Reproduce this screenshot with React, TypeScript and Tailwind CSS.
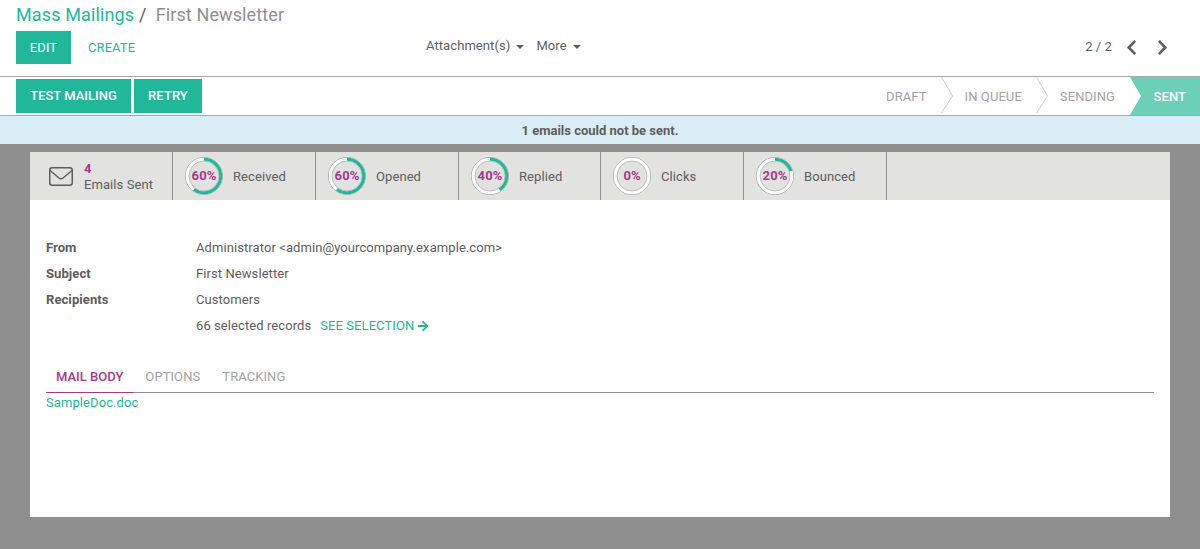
// Mass mailing form view: control panel, status bar, stat buttons, and the sheet below them.
import { FaArrowRight, FaChevronLeft, FaChevronRight } from 'react-icons/fa';

const GAUGES = [
    { pct: 60, label: 'Received', width: 'w-[143px]' },
    { pct: 60, label: 'Opened', width: 'w-[143px]' },
    { pct: 40, label: 'Replied', width: 'w-[142px]' },
    { pct: 0, label: 'Clicks', width: 'w-[143px]' },
    { pct: 20, label: 'Bounced', width: 'w-[143px]' },
];

const FIELDS = [
    { label: 'From', value: 'Administrator <admin@yourcompany.example.com>' },
    { label: 'Subject', value: 'First Newsletter' },
    { label: 'Recipients', value: 'Customers' },
];

function Gauge({ pct, label, width }: { pct: number; label: string; width: string }) {
    const r = 16.75;
    const c = 2 * Math.PI * r;
    return (
        <div className={`flex h-12 items-center gap-[10px] border-r border-[#8f8f8f] pl-[12px] ${width}`}>
            <div className="relative h-[38px] w-[38px] shrink-0">
                <svg viewBox="0 0 38 38" className="h-[38px] w-[38px]">
                    <circle cx="19" cy="19" r="18.5" fill="none" stroke="#8f9a98" strokeWidth="0.75" />
                    <circle cx="19" cy="19" r={r} fill="none" stroke="#ffffff" strokeWidth="3" />
                    <circle
                        cx="19"
                        cy="19"
                        r={r}
                        fill="none"
                        stroke="#21b799"
                        strokeWidth="3"
                        strokeDasharray={`${(c * pct) / 100} ${c}`}
                        transform="rotate(-90 19 19)"
                    />
                    <circle cx="19" cy="19" r="15" fill="none" stroke="#8f9a98" strokeWidth="0.5" />
                </svg>
                <span className="absolute inset-0 flex items-center justify-center text-[13px] font-bold text-[#a5388d]">{pct}%</span>
            </div>
            <span className="pt-[1px]">{label}</span>
        </div>
    );
}

function StepArrow() {
    return (
        <svg viewBox="0 0 12 38" className="h-[38px] w-[12px] shrink-0">
            <path d="M0.5 0 L11.5 19 L0.5 36" fill="none" stroke="#cfcfcf" strokeWidth="1" />
        </svg>
    );
}

export default function App() {
    return (
        <div className="flex h-[549px] w-[1200px] flex-col overflow-hidden bg-[#8f8f8f] text-[13px] leading-[18px] tracking-[0.08px] text-[#5d5d5d] [font-family:Roboto,sans-serif]">
            <div className="h-[77px] shrink-0 border-b border-[#a8a8a8] bg-white px-4">
                <div className="flex h-[31px] items-center pb-[2px] text-[18px] leading-6 tracking-[0.12px]">
                    <span className="text-[#21b799]">Mass Mailings</span>
                    <span className="ml-[5px] text-[#5d5d5d]">/</span>
                    <span className="ml-[9px] text-[#8f8f8f]">First Newsletter</span>
                </div>
                <div className="flex items-start">
                    <div className="flex w-[410px] items-center">
                        <button className="h-[33px] w-[55px] bg-[#21b799] text-white">EDIT</button>
                        <button className="ml-[17px] text-[#21b799]">CREATE</button>
                    </div>
                    <div className="flex items-center pt-[6px]">
                        <span>Attachment(s)</span>
                        <span className="ml-[6px] mt-[1px] h-0 w-0 border-x-[4px] border-t-[4px] border-x-transparent border-t-[#5d5d5d]" />
                        <span className="ml-[12px]">More</span>
                        <span className="ml-[6px] mt-[1px] h-0 w-0 border-x-[4px] border-t-[4px] border-x-transparent border-t-[#5d5d5d]" />
                    </div>
                    <div className="ml-auto flex items-center pt-[7px]">
                        <span>2 / 2</span>
                        <FaChevronLeft className="ml-[11px]" size={17} />
                        <FaChevronRight className="ml-[14px] mr-[13px]" size={17} />
                    </div>
                </div>
            </div>

            <div className="flex h-[39px] shrink-0 items-start justify-between border-b border-[#a8a8a8] bg-white pl-4">
                <div className="mt-[2px] flex gap-[3px]">
                    <button className="h-[34px] w-[115px] bg-[#21b799] font-medium tracking-normal text-white">TEST MAILING</button>
                    <button className="h-[34px] w-[68px] bg-[#21b799] font-medium text-white">RETRY</button>
                </div>
                <div className="flex h-[38px] items-center text-[#a3a3a3]">
                    <span className="pt-[1px]">DRAFT</span>
                    <span className="ml-[14px] mr-[12px]"><StepArrow /></span>
                    <span className="pt-[1px]">IN QUEUE</span>
                    <span className="ml-[14px] mr-[12px]"><StepArrow /></span>
                    <span className="pt-[1px]">SENDING</span>
                    <span className="ml-[15px] flex h-[38px] w-[70px] items-center justify-end bg-[#6ccfb8] pr-[14px] pt-[1px] font-medium text-white [clip-path:polygon(0_0,100%_0,100%_100%,0_100%,11px_50%)]">
                        SENT
                    </span>
                </div>
            </div>

            <div className="flex h-[28px] shrink-0 items-center justify-center bg-[#d9edf7] pt-[1px] font-bold tracking-normal text-[#5d5d5d]">
                1 emails could not be sent.
            </div>

            <div className="mx-[30px] mt-2 h-[365px] shrink-0 bg-white">
                <div className="flex h-12 bg-[#e2e2e0]">
                    <div className="flex h-12 w-[143px] items-center border-r border-[#8f8f8f] pl-[19px]">
                        <svg viewBox="0 0 24 19" className="h-[19px] w-[24px] shrink-0" fill="none" stroke="#5d5d5d" strokeWidth="1.5">
                            <rect x="0.75" y="0.75" width="22.5" height="17.5" rx="2.5" />
                            <path d="M1 3.5 L10 11 Q12 12.6 14 11 L23 3.5" />
                        </svg>
                        <div className="ml-[11px] pt-[1px] leading-[16px]">
                            <div className="font-bold text-[#a5388d]">4</div>
                            <div>Emails Sent</div>
                        </div>
                    </div>
                    {GAUGES.map((g) => (
                        <Gauge key={g.label} pct={g.pct} label={g.label} width={g.width} />
                    ))}
                </div>

                <div className="px-4 pt-[35px]">
                    {FIELDS.map((f) => (
                        <div key={f.label} className="flex h-[26px] items-center">
                            <span className="w-[150px] font-bold">{f.label}</span>
                            <span>{f.value}</span>
                        </div>
                    ))}
                    <div className="flex h-[26px] items-center pl-[150px]">
                        <span>66 selected records</span>
                        <span className="ml-[9px] text-[#21b799]">SEE SELECTION</span>
                        <FaArrowRight className="ml-[3px] text-[#21b799]" size={12} />
                    </div>

                    <div className="mt-[23px] flex h-[31px] items-center border-b border-[#8f8f8f] text-[#a3a3a3]">
                        <span className="flex h-[31px] items-center border-b border-[#a5388d] px-[10px] font-medium tracking-normal text-[#a5388d]">MAIL BODY</span>
                        <span className="ml-[12px]">OPTIONS</span>
                        <span className="ml-[22px]">TRACKING</span>
                    </div>
                    <div className="pt-[1px] text-[#21b799]">SampleDoc.doc</div>
                </div>
            </div>
        </div>
    );
}
